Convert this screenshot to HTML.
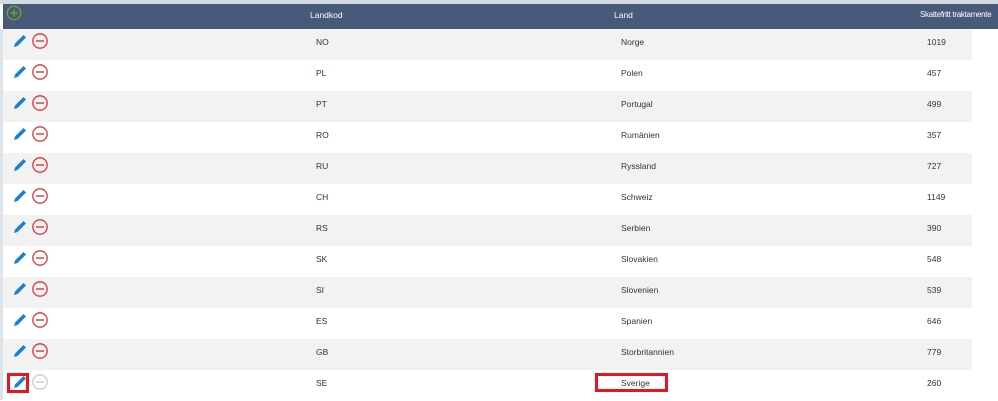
<!DOCTYPE html><html><head><style>
body{margin:0;width:998px;height:400px;overflow:hidden;background:#fff;font-family:"Liberation Sans",sans-serif;font-size:8.5px;color:#333;position:relative}
.top{position:absolute;left:0;top:0;width:998px;height:4px;background:#d5dbe4}
.hd{position:absolute;left:3px;top:4px;width:995px;height:25px;background:#48597a;color:#fff}
.hd span{position:absolute;top:6px;white-space:nowrap}
.row{position:absolute;left:3px;width:969px;height:31px}
.row.g{background:#f2f2f2}
.row span{position:absolute;top:8px;white-space:nowrap}
.lstrip{position:absolute;left:0;top:29px;width:3px;height:371px;background:#dde4ee}
svg{position:absolute}
</style></head><body>
<div class="top"></div>
<div class="hd">
<svg style="left:3px;top:1px" width="16" height="16" viewBox="0 0 16 16"><circle cx="8" cy="8" r="6.8" fill="none" stroke="#6aa527" stroke-width="1.4"/><path d="M8 4.5v7M4.5 8h7" stroke="#6aa527" stroke-width="1.5"/></svg>
<span style="left:307px">Landkod</span><span style="left:611px">Land</span><span style="left:917px;letter-spacing:-0.3px;font-size:8px">Skattefritt traktamente</span></div>
<div class="lstrip"></div>
<div id="rows"></div>
<script>
var d=[["NO","Norge","1019"],["PL","Polen","457"],["PT","Portugal","499"],["RO","Rumänien","357"],["RU","Ryssland","727"],["CH","Schweiz","1149"],["RS","Serbien","390"],["SK","Slovakien","548"],["SI","Slovenien","539"],["ES","Spanien","646"],["GB","Storbritannien","779"],["SE","Sverige","260"]];
var h="";d.forEach(function(r,i){var t=29+i*31,last=i==11,mc=last?"#ccc":"#d9363e";
h+='<div class="row'+(i%2==0?' g':'')+'" style="top:'+t+'px">'+
'<svg style="left:9px;top:4px" width="16" height="16" viewBox="0 0 16 16"><path d="M2 14l1-3.5L11.5 2l2.5 2.5L5.5 13z" fill="#1a7fd4"/></svg>'+
'<svg style="left:28px;top:3px" width="18" height="18" viewBox="0 0 18 18"><circle cx="9" cy="9" r="7.2" fill="none" stroke="'+mc+'" stroke-width="1.3"/><path d="M5 9h8" stroke="'+mc+'" stroke-width="1.4"/></svg>'+
'<span style="left:313px;color:#3b2b3b">'+r[0]+'</span><span style="left:618px">'+r[1]+'</span><span style="left:924px">'+r[2]+'</span></div>';});
h+='<div style="position:absolute;left:7px;top:373px;width:16px;height:14px;border:3px solid #e8141e"></div>';
h+='<div style="position:absolute;left:595px;top:373px;width:67px;height:13px;border:3px solid #e8141e"></div>';
document.getElementById("rows").innerHTML=h;
</script>
</body></html>
